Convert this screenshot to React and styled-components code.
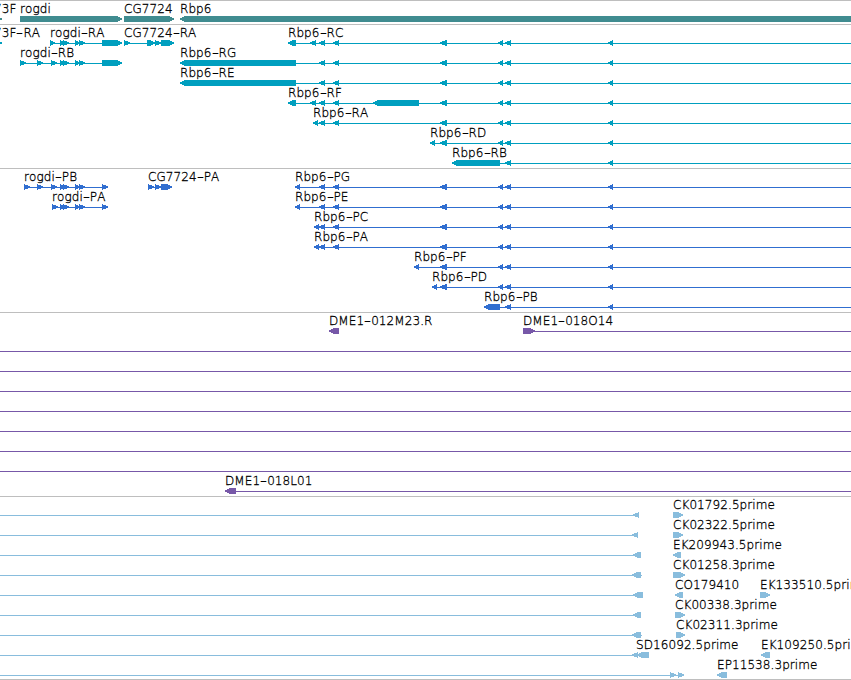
import React from "react";
import styled, { createGlobalStyle } from "styled-components";

const GlobalStyle = createGlobalStyle`
    body {
        margin: 0;
        background: white;
    }
`;

const Browser = styled.div`
    display: flex;
    flex-direction: column;
    width: 851px;
    height: 680px;
    overflow: hidden;
`;

const Track = styled.section`
    flex: none;
    padding-top: 3px;
    border-top: 1px solid #bebebe;
    color: ${props => props.$color};
`;

const LastTrack = styled(Track)`
    box-sizing: border-box;
    height: 184px;
    border-bottom: 1px solid #bebebe;
`;

const Row = styled.div`
    position: relative;
    height: 20px;
`;

const Label = styled.span`
    position: absolute;
    top: -3px;
    left: ${props => props.$x}px;
    font-family: 'DejaVu Sans Light', 'DejaVu Sans', sans-serif;
    font-size: 12px;
    line-height: 16px;
    letter-spacing: 0.08px;
    font-kerning: none;
    white-space: pre;
    color: black;
    -webkit-text-stroke: 0.3px black;
`;

const Dash = styled.span`
    display: inline-block;
    width: 7px;
    transform: scaleX(1.6);
    transform-origin: left;
`;

const Glyphs = styled.svg`
    display: block;
    width: 851px;
    height: 20px;
    fill: currentColor;
    shape-rendering: crispEdges;
`;

const END = 851;

// tip is at most 5px long, the rest of the exon is a plain box
const exonPoints = (start, end, dir) => {
    const size = end - start;
    const tip = size > 6 ? 5 : size;
    if (dir === "r") {
        return `${start},12 ${end - tip},12 ${end},14.4 ${end},15.6 ${end - tip},18 ${start},18`;
    }
    return `${end},12 ${start + tip},12 ${start},14.4 ${start},15.6 ${start + tip},18 ${end},18`;
};

const f = (line, dir, ...exons) => ({ line, dir, exons });

const CODING = [[440, 446], [441, 447], [498, 503], [505, 511], [608, 613]];
const TAIL = [[319, 325], [333, 339], ...CODING];
const ROGDI = [[60, 65], [63, 69], [75, 80], [79, 85]];

const genes = [
    {
        labels: [[-6, "73F"], [20, "rogdi"], [124, "CG7724"], [180, "Rbp6"]],
        features: [f(null, "r", [-20, 2]), f(null, "r", [20, 122]), f(null, "r", [124, 174]), f(null, "l", [180, 860])],
    },
];

const transcripts = [
    {
        labels: [[-6, "73F-RA"], [50, "rogdi-RA"], [124, "CG7724-RA"], [288, "Rbp6-RC"]],
        features: [
            f(null, "r", [-20, 2]),
            f([50, 122], "r", [50, 55], ...ROGDI, [102, 122]),
            f([124, 174], "r", [124, 130], [147, 155], [155, 161], [161, 174]),
            f([288, END], "l", [288, 296], [310, 316], ...TAIL),
        ],
    },
    {
        labels: [[20, "rogdi-RB"], [180, "Rbp6-RG"]],
        features: [
            f([20, 122], "r", [20, 26], [37, 43], [51, 57], ...ROGDI, [102, 122]),
            f([180, END], "l", [180, 296], ...TAIL),
        ],
    },
    { labels: [[180, "Rbp6-RE"]], features: [f([180, END], "l", [180, 296], ...TAIL)] },
    { labels: [[288, "Rbp6-RF"]], features: [f([288, END], "l", [288, 296], [310, 316], [373, 419], ...TAIL)] },
    { labels: [[313, "Rbp6-RA"]], features: [f([313, END], "l", [313, 318], ...TAIL)] },
    { labels: [[430, "Rbp6-RD"]], features: [f([430, END], "l", [430, 435], ...CODING)] },
    { labels: [[452, "Rbp6-RB"]], features: [f([452, END], "l", [452, 500], [505, 511], [608, 613])] },
];

const proteins = [
    {
        labels: [[24, "rogdi-PB"], [148, "CG7724-PA"], [295, "Rbp6-PG"]],
        features: [
            f([24, 107], "r", [24, 30], [37, 43], [51, 57], ...ROGDI, [102, 108]),
            f([148, 172], "r", [148, 154], [155, 161], [161, 172]),
            f([295, END], "l", [295, 300], ...TAIL),
        ],
    },
    {
        labels: [[52, "rogdi-PA"], [295, "Rbp6-PE"]],
        features: [
            f([52, 107], "r", [52, 58], ...ROGDI, [102, 108]),
            f([295, END], "l", [295, 300], ...TAIL),
        ],
    },
    { labels: [[314, "Rbp6-PC"]], features: [f([314, END], "l", [314, 319], ...TAIL)] },
    { labels: [[314, "Rbp6-PA"]], features: [f([314, END], "l", [314, 319], ...TAIL)] },
    { labels: [[414, "Rbp6-PF"]], features: [f([414, END], "l", [414, 419], ...CODING)] },
    { labels: [[432, "Rbp6-PD"]], features: [f([432, END], "l", [432, 437], ...CODING)] },
    { labels: [[484, "Rbp6-PB"]], features: [f([484, END], "l", [484, 500], [505, 511], [608, 613])] },
];

const clones = [
    {
        labels: [[329, "DME1-012M23.R"], [523, "DME1-018O14"]],
        features: [f(null, "l", [329, 339]), f([523, END], "r", [523, 535])],
    },
    ...Array.from({ length: 7 }, () => ({ labels: [], features: [f([0, END], "r")] })),
    { labels: [[225, "DME1-018L01"]], features: [f([225, END], "l", [225, 236])] },
];

const ests = [
    { labels: [[673, "CK01792.5prime"]], features: [f([0, 639], "l", [633, 639]), f(null, "r", [673, 683])] },
    { labels: [[673, "CK02322.5prime"]], features: [f([0, 638], "l", [632, 638]), f(null, "r", [673, 683])] },
    { labels: [[673, "EK209943.5prime"]], features: [f([0, 641], "l", [633, 641]), f(null, "l", [673, 681])] },
    { labels: [[673, "CK01258.3prime"]], features: [f([0, 642], "l", [632, 641]), f(null, "r", [673, 685])] },
    {
        labels: [[675, "CO179410"], [760, "EK133510.5prime"]],
        features: [f([0, 643], "l", [633, 643]), f(null, "l", [675, 683]), f(null, "r", [760, 770])],
    },
    { labels: [[675, "CK00338.3prime"]], features: [f([0, 641], "l", [633, 641]), f(null, "r", [675, 685])] },
    { labels: [[676, "CK02311.3prime"]], features: [f([0, 642], "l", [632, 641]), f(null, "r", [676, 685])] },
    {
        labels: [[636, "SD16092.5prime"], [761, "EK109250.5prime"]],
        features: [f([0, 649], "l", [632, 638], [637, 649]), f(null, "l", [761, 770])],
    },
    {
        labels: [[717, "EP11538.3prime"]],
        features: [f([0, 683], "r", [670, 676], [678, 684]), f(null, "l", [717, 727])],
    },
];

const Feature = ({ line, dir, exons }) => (
    <g>
        {line && <rect x={line[0]} y="15" width={line[1] - line[0]} height="1" />}
        {exons.map(([start, end], index) => (
            <polygon key={index} points={exonPoints(start, end, dir)} />
        ))}
    </g>
);

const Name = ({ x, text }) => {
    const [name, suffix] = text.split("-");
    return (
        <Label $x={x}>
            {name}
            {suffix && <Dash>-</Dash>}
            {suffix}
        </Label>
    );
};

const Rows = ({ rows }) =>
    rows.map((row, index) => (
        <Row key={index}>
            <Glyphs viewBox="0 0 851 20">
                {row.features.map((feature, i) => <Feature key={i} {...feature} />)}
            </Glyphs>
            {row.labels.map(([x, text]) => <Name key={text} x={x} text={text} />)}
        </Row>
    ));

const App = () => {
    return (
        <>
            <GlobalStyle />
            <Browser>
                <Track $color="#408c90"><Rows rows={genes} /></Track>
                <Track $color="#009fbf"><Rows rows={transcripts} /></Track>
                <Track $color="#306ed0"><Rows rows={proteins} /></Track>
                <Track $color="#7758a8"><Rows rows={clones} /></Track>
                <LastTrack $color="#89bddd"><Rows rows={ests} /></LastTrack>
            </Browser>
        </>
    );
};

export default App;
